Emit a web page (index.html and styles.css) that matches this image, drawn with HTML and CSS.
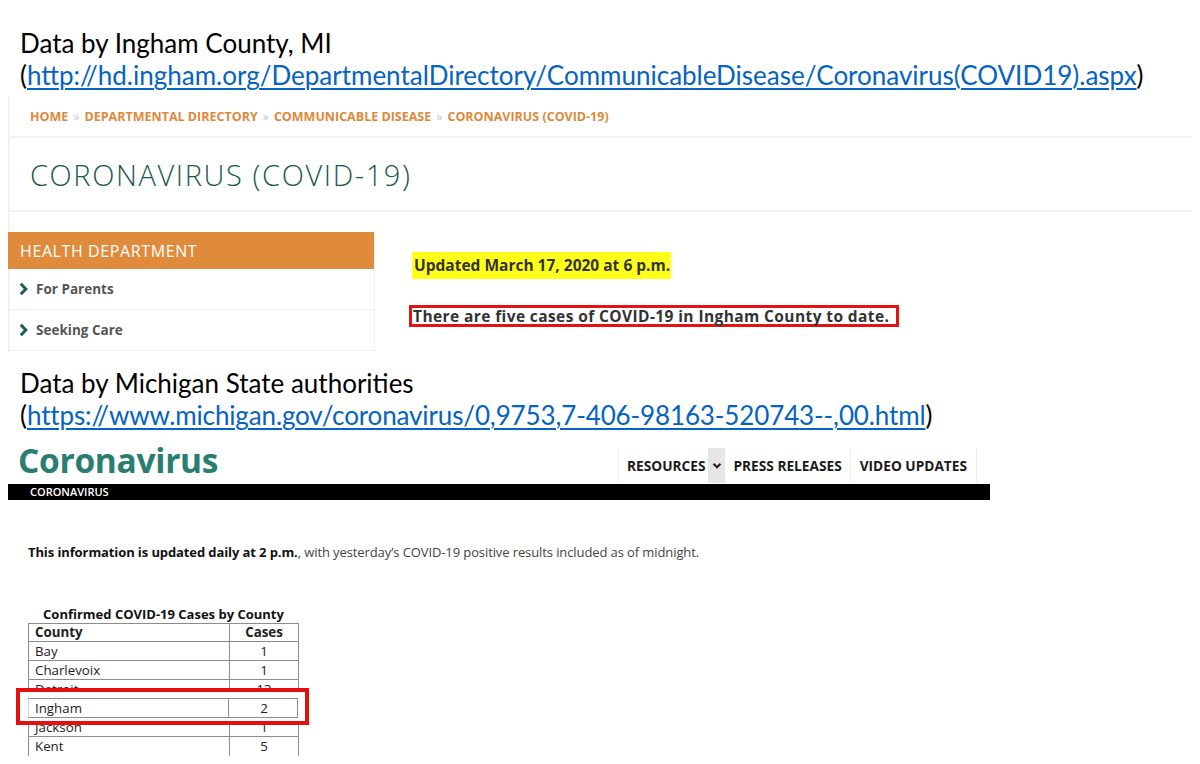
FILE: index.html
```html
<!DOCTYPE html>
<html lang="en">
<head>
<meta charset="utf-8">
<title>COVID-19 data comparison</title>
<link rel="stylesheet" href="styles.css">
</head>
<body>
<section class="src src-first">
  <p class="src-line">Data by Ingham County, MI</p>
  <p class="src-line">(<a class="src-link" href="#">http://hd.ingham.org/DepartmentalDirectory/CommunicableDisease/Coronavirus(COVID19).aspx</a>)</p>
</section>

<div class="ingham">
  <nav class="crumbs">
    <a href="#">HOME</a><span class="sep">»</span><a href="#">DEPARTMENTAL DIRECTORY</a><span class="sep">»</span><a href="#">COMMUNICABLE DISEASE</a><span class="sep">»</span><a href="#">CORONAVIRUS (COVID-19)</a>
  </nav>
  <h1 class="ing-title">CORONAVIRUS (COVID-19)</h1>
  <div class="ing-body">
    <aside class="side">
      <div class="side-head">HEALTH DEPARTMENT</div>
      <div class="side-item"><svg class="chev" viewBox="0 0 9 14" width="9" height="14"><polyline points="1.8,1.8 6.8,7 1.8,12.2" fill="none" stroke="#1b5d52" stroke-width="3"/></svg><span>For Parents</span></div>
      <div class="side-item"><svg class="chev" viewBox="0 0 9 14" width="9" height="14"><polyline points="1.8,1.8 6.8,7 1.8,12.2" fill="none" stroke="#1b5d52" stroke-width="3"/></svg><span>Seeking Care</span></div>
    </aside>
    <div class="ing-content">
      <p class="upd"><mark class="hl">Updated March 17, 2020 at 6 p.m.</mark></p>
      <p class="cases"><span class="boxed">There are five cases of COVID-19 in Ingham County to date.</span></p>
    </div>
  </div>
</div>

<section class="src src-second">
  <p class="src-line">Data by Michigan State authorities</p>
  <p class="src-line">(<a class="src-link src-link-tight" href="#">https://www.michigan.gov/coronavirus/0,9753,7-406-98163-520743--,00.html</a>)</p>
</section>

<div class="mich">
  <header class="mich-head">
    <div class="mich-logo">Coronavirus</div>
    <nav class="mich-nav">
      <span class="nav-item nav-res">RESOURCES</span><span class="nav-drop"><svg viewBox="0 0 10 8" width="10" height="8"><polyline points="1.5,1.8 5,5.3 8.5,1.8" fill="none" stroke="#222" stroke-width="2.2"/></svg></span><span class="nav-item">PRESS RELEASES</span><span class="nav-item nav-last">VIDEO UPDATES</span>
    </nav>
  </header>
  <div class="mich-bar">CORONAVIRUS</div>
  <p class="mich-note"><b>This information is updated daily at 2 p.m.</b>, with yesterday’s COVID-19 positive results included as of midnight.</p>

  <div class="tbl-wrap">
    <table class="cases-tbl">
      <caption>Confirmed COVID-19 Cases by County</caption>
      <thead><tr><th class="c-county">County</th><th class="c-cases">Cases</th></tr></thead>
      <tbody>
        <tr><td>Bay</td><td class="num">1</td></tr>
        <tr><td>Charlevoix</td><td class="num">1</td></tr>
        <tr><td>Detroit</td><td class="num">13</td></tr>
        <tr class="hl-row"><td>Ingham</td><td class="num">2</td></tr>
        <tr><td>Jackson</td><td class="num">1</td></tr>
        <tr><td>Kent</td><td class="num">5</td></tr>
      </tbody>
    </table>
    <div class="callout"></div>
  </div>
</div>
</body>
</html>
```

FILE: styles.css
```css
* { box-sizing: border-box; }

body {
  margin: 0;
  background: #fff;
  font-family: "Open Sans", "Liberation Sans", sans-serif;
  color: #222;
}

p { margin: 0; }

/* Source captions (slide text) */
.src {
  padding-left: 20px;
  font-family: Lato, "Liberation Sans", sans-serif;
  font-size: 26px;
  line-height: 32px;
  color: #000;
}
.src-first { padding-top: 27px; }
.src-second { padding-top: 15px; }
.src-link {
  color: #0563c1;
  text-decoration: underline;
  text-underline-offset: 3px;
  text-decoration-thickness: 1.5px;
}
.src-link-tight { letter-spacing: -0.13px; }

/* Ingham County screenshot */
.ingham {
  margin: 5px 8px 0 8px;
  border-left: 2px solid #f1f1f1;
  height: 256px;
}
.crumbs {
  height: 42px;
  padding-left: 20px;
  display: flex;
  align-items: center;
  border-bottom: 2px solid #f1f1f1;
  font-size: 12.5px;
  font-weight: 700;
}
.crumbs a { color: #e0883a; text-decoration: none; }
.crumbs .sep { color: #c9c9c9; margin: 0 5px; font-weight: 400; }

.ing-title {
  margin: 0;
  height: 74px;
  padding-left: 20px;
  display: flex;
  align-items: center;
  border-bottom: 2px solid #f1f1f1;
  font-family: "Open Sans", sans-serif;
  font-weight: 300;
  font-size: 29px;
  letter-spacing: 1.6px;
  color: #1b5a4e;
}

.ing-body {
  display: flex;
  padding-top: 20px;
}
.side {
  width: 367px;
  margin-left: -2px;
  border-right: 1px solid #f1f1f1;
}
.side-head {
  height: 37px;
  background: #e08b3b;
  color: #fff;
  font-size: 16px;
  padding-left: 12px;
  display: flex;
  align-items: center;
  letter-spacing: 0.6px;
}
.side-item {
  height: 41px;
  display: flex;
  align-items: center;
  gap: 8px;
  padding-left: 11px;
  border-bottom: 1px solid #f1f1f1;
  font-size: 13.5px;
  font-weight: 700;
  color: #555;
}
.chev { flex: none; }

.ing-content {
  padding-left: 37px;
  padding-top: 21px;
  font-size: 15.5px;
  font-weight: 700;
  color: #333;
}
.upd { line-height: 25px; }
.hl {
  background: #ffff1a;
  color: #333;
  padding: 2px 1px 3px 2px;
}
.cases { margin-top: 27px; margin-left: -3px; }
.boxed {
  display: inline-block;
  border: 3px solid #e41313;
  padding: 0 7px 0 1px;
  line-height: 16px;
  height: 22px;
  letter-spacing: 0.4px;
}

/* Michigan screenshot */
.mich {
  margin: 0 0 0 8px;
  width: 982px;
}
.mich-head {
  height: 53px;
  display: flex;
  justify-content: space-between;
  align-items: flex-end;
}
.mich-logo {
  padding-left: 10px;
  font-size: 33.5px;
  font-weight: 700;
  color: #2a7d71;
  line-height: 44px;
  align-self: flex-start;
  padding-top: 7px;
  letter-spacing: -0.3px;
}
.mich-nav {
  display: flex;
  height: 35px;
  margin-right: 13px;
  margin-bottom: 1px;
  border-left: 1px solid #eee;
  border-right: 1px solid #eee;
}
.nav-item {
  display: flex;
  align-items: center;
  padding: 0 8px;
  font-size: 13.7px;
  font-weight: 700;
  color: #1a1a1a;
}
.nav-res { padding-right: 3px; }
.nav-drop {
  width: 17px;
  background: #e6e6e6;
  display: flex;
  align-items: center;
  justify-content: center;
}
.nav-last { border-left: 1px solid #eee; padding: 0 9px; }

.mich-bar {
  height: 16px;
  background: #000;
  color: #fff;
  font-size: 11px;
  font-weight: 600;
  line-height: 16px;
  padding-left: 22px;
}

.mich-note {
  margin-top: 43px;
  padding-left: 20px;
  font-size: 13px;
  color: #444;
  letter-spacing: -0.1px;
}
.mich-note b { color: #111; }

.tbl-wrap {
  position: relative;
  margin-top: 44px;
  margin-left: 20px;
  width: 271px;
}
.cases-tbl {
  border-collapse: collapse;
  width: 271px;
  font-size: 13.3px;
  color: #222;
}
.cases-tbl caption {
  font-weight: 700;
  font-size: 13px;
  line-height: 18px;
  color: #111;
}
.cases-tbl th, .cases-tbl td {
  border: 1px solid #8c8c8c;
  height: 19px;
  padding: 0 6px;
  line-height: 17px;
  text-align: left;
}
.cases-tbl th { font-weight: 700; height: 18px; }
.cases-tbl tbody tr:last-child td { border-bottom: none; }
.cases-tbl .c-county { width: 201px; }
.cases-tbl .c-cases, .cases-tbl .num { text-align: center; }

/* highlighted row sits above the white callout box */
.hl-row td {
  position: relative;
  z-index: 2;
}
.hl-row td::before {
  content: "";
  position: absolute;
  top: -1px;
  bottom: -1px;
  left: -1px;
  right: 0;
  border-top: 1px solid #8c8c8c;
  border-bottom: 1px solid #8c8c8c;
  border-right: 1px solid #8c8c8c;
}
.hl-row td:first-child::before { border-left: 1px solid #d6d6d6; }

.callout {
  position: absolute;
  left: -12px;
  top: 83px;
  width: 293px;
  height: 37px;
  border: 4px solid #e31010;
  background: #fff;
  z-index: 1;
}
```
